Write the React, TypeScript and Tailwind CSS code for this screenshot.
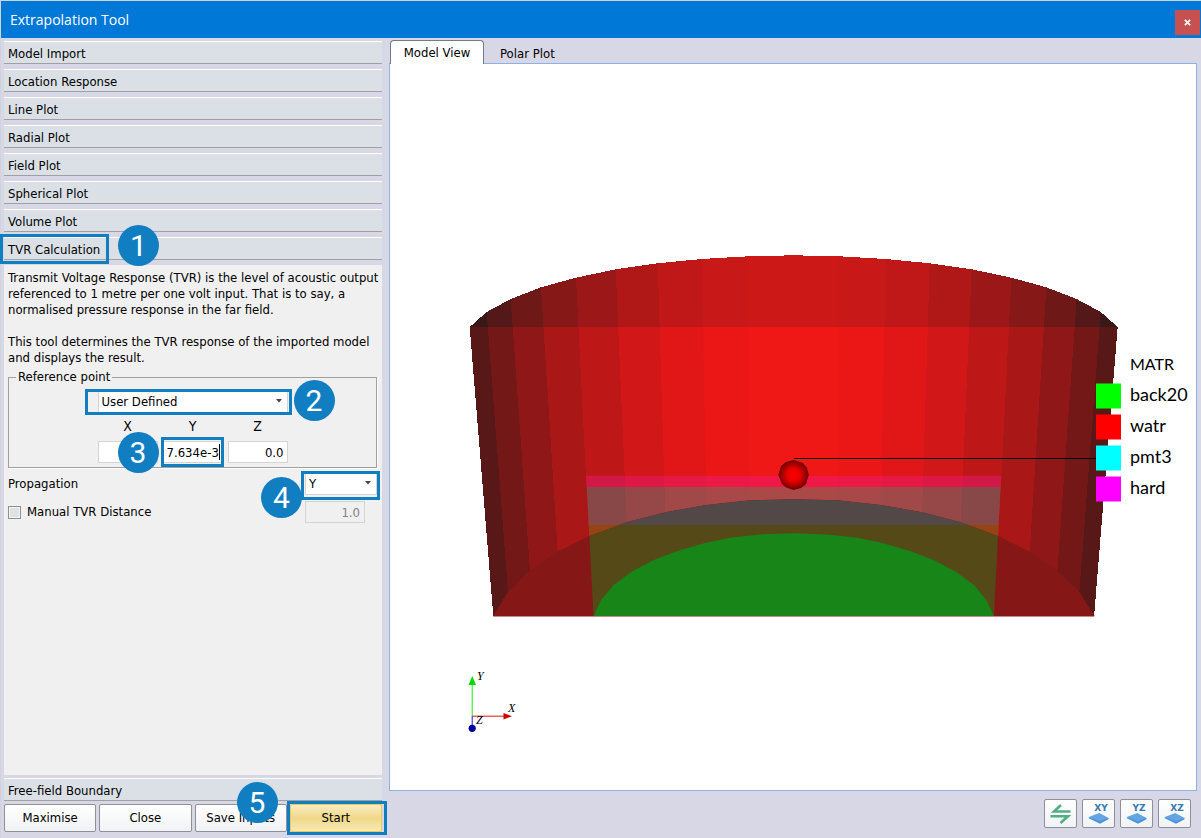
import React, { useState } from 'react';

const sections = [
  'Model Import',
  'Location Response',
  'Line Plot',
  'Radial Plot',
  'Field Plot',
  'Spherical Plot',
  'Volume Plot',
];

type Point = [number, number];

const CENTER_X = 793.7;

// Left half of each arc, the right half is mirrored
const rimLeft: Point[] = [
  [469.7, 327], [486.7, 312], [510.7, 299], [541, 287.3], [576, 277.7],
  [615.7, 269.3], [657.7, 263.3], [701.7, 259], [748, 256.3],
];
const floorLeft: Point[] = [
  [493.3, 616], [508, 592], [530, 571], [557.7, 551.7], [589, 536.3],
  [626.7, 522.3], [665.3, 512.3], [706.3, 505], [750, 500.3],
];
const discLeft: Point[] = [
  [593.7, 616], [601, 600], [613.3, 585.3], [631, 572], [653.3, 560.3],
  [677.3, 551], [705, 543], [730, 537.7], [760, 534.4],
];

const wallColors = ['#581818', '#741717', '#8f1717', '#a91717', '#be1717', '#d11717', '#e11717', '#eb1717', '#f01717'];
const rimColors = ['#3a1818', '#541818', '#6e1818', '#871818', '#9c1818', '#b01818', '#c01818', '#c81818', '#cd1818'];

const mirror = (points: Point[], top: number): Point[] => [
  ...points,
  [CENTER_X, top],
  ...[...points].reverse().map(([x, y]): Point => [2 * CENTER_X - x, y]),
];

const toPoints = (points: Point[]) => points.map((p) => p.join(',')).join(' ');

const rim = mirror(rimLeft, 255.3);
const floor = mirror(floorLeft, 499.3);
const disc = mirror(discLeft, 533.3);

const materials = [
  { name: 'back20', color: '#00ff00' },
  { name: 'watr', color: '#ff0000' },
  { name: 'pmt3', color: '#00ffff' },
  { name: 'hard', color: '#ff00ff' },
];

function Wall({ colors }: { colors: string[] }) {
  return (
    <g shapeRendering="crispEdges">
      {rim.slice(0, -1).map((p, i) => (
        <polygon
          key={i}
          points={toPoints([p, rim[i + 1], floor[i + 1], floor[i]])}
          fill={colors[i < 9 ? i : 17 - i]}
        />
      ))}
    </g>
  );
}

function ModelScene() {
  return (
    <svg viewBox="390 64 806 726" className="block w-full h-auto" role="img" aria-label="Model view">
      <defs>
        <clipPath id="upper"><rect x="460" y="240" width="670" height="87" /></clipPath>
        <clipPath id="floor"><polygon points={toPoints(floor)} /></clipPath>
        <radialGradient id="ball">
          <stop offset="0" stopColor="#ff0000" />
          <stop offset="0.45" stopColor="#e60000" />
          <stop offset="1" stopColor="#6b0000" />
        </radialGradient>
      </defs>

      {/* Water volume */}
      <polygon points={toPoints(floor)} fill="#851717" stroke="#851717" />
      <Wall colors={wallColors} />
      <g clipPath="url(#upper)"><Wall colors={rimColors} /></g>

      {/* Transducer layers */}
      <polygon points="586,475.7 1001.4,475.7 1000.6,487 586.8,487" fill="#ee1a88" fillOpacity="0.42" />
      <polygon points="586.8,487 1000.6,487 998.6,525 588.8,525" fill="#14b8b8" fillOpacity="0.31" />
      <polygon points="588.8,525 998.6,525 994,616 593.5,616" fill="#30c010" fillOpacity="0.27" />

      <polygon points={toPoints(floor)} fill="#851717" />
      <g clipPath="url(#floor)">
        <polygon points="586.8,487 1000.6,487 998.6,525 588.8,525" fill="#524848" />
        <polygon points="588.8,525 998.6,525 994,616 593.5,616" fill="#554918" />
      </g>
      <polygon points={toPoints(disc)} fill="#178517" />

      <path d="M794 458.5H1096" stroke="#000" />
      <polygon
        points="793.5,460 803,463 807,468 808.8,475 806,484 801,488 793.5,490 786,487.5 782,484 778.3,475 781,466 786,462"
        fill="url(#ball)"
      />

      {/* Legend */}
      <g className="font-[Lato,sans-serif] text-[18px]">
        <text x="1130" y="370" className="text-[16px]">MATR</text>
        {materials.map((m, i) => (
          <g key={m.name}>
            <rect x="1096" y={383.5 + i * 31} width="25" height="25" fill={m.color} />
            <text x="1130" y={401 + i * 31}>{m.name}</text>
          </g>
        ))}
      </g>

      {/* Axes */}
      <path d="M472.3 716V684" stroke="#60f060" strokeWidth="1.5" />
      <path d="M472 716.2H505" stroke="#f06060" strokeWidth="1.5" />
      <path d="M472.3 716V726" stroke="#6060e8" strokeWidth="1.5" />
      <polygon points="472.3,676 468.5,685 476,685" fill="#00d800" />
      <polygon points="512,716.2 503.5,713 503.5,719.5" fill="#d00000" />
      <circle cx="472.2" cy="728.3" r="3.6" fill="#00009a" />
      <g className="font-['Liberation_Serif',serif] italic text-[12px]">
        <text x="477" y="680">Y</text>
        <text x="508" y="712">X</text>
        <text x="476" y="724">Z</text>
      </g>
    </svg>
  );
}

function Badge({ n, className }: { n: number; className: string }) {
  return (
    <span
      className={`absolute z-20 flex size-[41px] items-center justify-center rounded-full bg-[#117ec1] font-[Roboto,sans-serif] text-[30px] leading-none text-white pointer-events-none ${className}`}
    >
      {n}
    </span>
  );
}

function Highlight({ className }: { className: string }) {
  return <span className={`absolute z-10 border-3 border-[#117ec1] pointer-events-none ${className}`} />;
}

function SectionHeader({ title, children }: { title: string; children?: React.ReactNode }) {
  return (
    <div className="relative">
      <button className="block h-[23px] w-full border-t border-b border-t-white border-b-[#a0a0a0] bg-[#dbe0e7] pl-1 pt-0.5 text-left leading-5">
        {title}
      </button>
      {children}
    </div>
  );
}

function Combo({ id, label, options, className }: { id: string; label: string; options: string[]; className: string }) {
  return (
    <div className={`relative ${className}`}>
      <select id={id} aria-label={label} className="block h-[22px] w-full appearance-none border border-[#d4d4d4] bg-white pl-[3px] outline-none">
        {options.map((o) => <option key={o}>{o}</option>)}
      </select>
      <svg viewBox="0 0 6 4" className="absolute right-1.5 top-2 h-1 w-1.5 pointer-events-none">
        <path d="M0 0h6L3 3.5z" fill="#444" />
      </svg>
    </div>
  );
}

function PlaneIcon({ label }: { label: string }) {
  return (
    <svg viewBox="0 0 24 24" className="size-6">
      <text x="14" y="9" textAnchor="middle" fill="#3878b4" className="font-['DejaVu_Sans',sans-serif] text-[9px] font-bold">
        {label}
      </text>
      <path d="M1.8 15l10.5-4 9.2 5-8.6 5z" fill="#62a5e2" />
      <path d="M1.8 15l11 4.4 8.7-3.6v1.4l-8.5 4.6L1.8 16.2z" fill="#4a92d6" />
    </svg>
  );
}

const coordClass = 'h-[22px] w-[60px] border border-[#d4d4d4] bg-white px-[3px] text-right outline-none';
const coordLabelClass = 'pb-2 text-[14px] leading-[14px]';
const buttonClass = 'h-7 w-full rounded-xs border border-[#8e8f98] bg-linear-to-b from-white to-[#f1f2f5]';
const toolClass = 'flex h-[29px] w-[33px] items-center justify-center rounded-xs border border-[#8e8f98] bg-linear-to-b from-white to-[#f1f2f5]';

export default function App() {
  const [point, setPoint] = useState({ x: '0.0', y: '7.634e-3', z: '0.0' });
  const [manual, setManual] = useState(false);

  return (
    <div className="flex min-h-screen flex-col border-l border-t border-[#d0d4dc] bg-[#d8d7e5] font-['DejaVu_Sans_Condensed','DejaVu_Sans',sans-serif] text-[13px] text-black">
      <header className="flex h-[37px] items-center justify-between bg-[#0078d7] pl-[9px]">
        <h1 className="font-['Open_Sans',sans-serif] text-[14px] text-white">Extrapolation Tool</h1>
        <button aria-label="Close window" className="mr-px mt-1.5 flex size-[25px] items-center justify-center bg-[#c75050]">
          <svg viewBox="0 0 8 8" className="size-[7px]">
            <path d="M1 1l6 6M7 1L1 7" stroke="#fff" strokeWidth="2" />
          </svg>
        </button>
      </header>

      <div className="flex flex-1">
        {/* Left side */}
        <aside className="flex w-[381px] shrink-0 flex-col pb-1.5 pl-[3px] pt-[3px]">
          <div className="flex flex-col gap-[5px]">
            {sections.map((s) => <SectionHeader key={s} title={s} />)}
            <SectionHeader title="TVR Calculation">
              <Highlight className="-left-1 -top-[3px] h-[30px] w-[109px]" />
              <Badge n={1} className="-top-3 left-[114px]" />
            </SectionHeader>
          </div>

          <section className="mt-[5px] flex-1 bg-[#f0f0f0] pl-1 pr-[5px] pt-[5px]">
            <p className="whitespace-nowrap leading-4">
              Transmit Voltage Response (TVR) is the level of acoustic output<br />
              referenced to 1 metre per one volt input. That is to say, a<br />
              normalised pressure response in the far field.
            </p>
            <p className="mt-4 whitespace-nowrap leading-4">
              This tool determines the TVR response of the imported model<br />
              and displays the result.
            </p>

            <fieldset className="relative mt-[3px] flex flex-col items-center border border-[#a0a0a0] pb-1 shadow-[1px_1px_0_#fff]">
              <legend className="ml-[7px] px-0.5 leading-4">Reference point</legend>
              <div className="relative mt-1.5">
                <Combo id="ref" label="Reference point" options={['User Defined', 'Origin']} className="w-[190px]" />
                <Highlight className="-left-[13px] -top-0.5 h-[26px] w-[207px]" />
                <Badge n={2} className="-top-[11px] left-[196px]" />
              </div>
              <div className="mt-1.5 flex gap-[5px]">
                <div className="relative flex flex-col items-center">
                  <label htmlFor="px" className={coordLabelClass}>X</label>
                  <input id="px" className={coordClass} value={point.x} onChange={(e) => setPoint({ ...point, x: e.target.value })} />
                  <Badge n={3} className="left-5 top-[13px]" />
                </div>
                <div className="relative flex flex-col items-center">
                  <label htmlFor="py" className={coordLabelClass}>Y</label>
                  <input id="py" className={coordClass} value={point.y} onChange={(e) => setPoint({ ...point, y: e.target.value })} />
                  <span className="absolute right-[3px] top-[25px] h-4 w-px bg-black" />
                  <Highlight className="-left-0.5 top-[18px] h-[30px] w-[63px]" />
                </div>
                <div className="flex flex-col items-center">
                  <label htmlFor="pz" className={coordLabelClass}>Z</label>
                  <input id="pz" className={coordClass} value={point.z} onChange={(e) => setPoint({ ...point, z: e.target.value })} />
                </div>
              </div>
            </fieldset>

            <div className="mt-[5px] flex items-center justify-between">
              <label htmlFor="propagation">Propagation</label>
              <div className="relative">
                <Combo id="propagation" label="Propagation" options={['Y', 'X', 'Z']} className="w-[72px]" />
                <Highlight className="-left-1 -top-0.5 h-[29px] w-[79px]" />
                <Badge n={4} className="-left-11 top-1" />
              </div>
            </div>

            <div className="mt-1.5 flex items-center justify-between">
              <label className="flex items-center gap-1.5">
                <input
                  type="checkbox"
                  checked={manual}
                  onChange={(e) => setManual(e.target.checked)}
                  className="size-[13px] appearance-none border border-[#8e8f8f] bg-[#dfe2e5] shadow-[inset_0_0_0_1px_#f4f4f4] checked:bg-[#117ec1]"
                />
                Manual TVR Distance
              </label>
              <input
                aria-label="TVR distance"
                disabled={!manual}
                defaultValue="1.0"
                className="mr-3 h-[22px] w-[60px] border border-[#d4d4d4] bg-[#f0f0f0] px-1 text-right text-[#838383]"
              />
            </div>
          </section>

          <div className="mt-[3px]">
            <SectionHeader title="Free-field Boundary" />
          </div>

          <div className="mt-[3px] grid grid-cols-4 gap-[3px]">
            <button className={buttonClass}>Maximise</button>
            <button className={buttonClass}>Close</button>
            <div className="relative">
              <button className={buttonClass}>Save Inputs</button>
              <Badge n={5} className="-top-[22px] left-[42px]" />
            </div>
            <div className="relative">
              <button className="h-7 w-full rounded-xs border border-[#e8c95c] bg-linear-to-b from-[#f8ecc4] via-[#f0d888] to-[#f7e8b4]">Start</button>
              <Highlight className="-left-[3px] -right-[5px] -top-[3px] h-[34px]" />
            </div>
          </div>
        </aside>

        {/* Right side */}
        <main className="flex min-w-0 flex-1 flex-col pl-[7px] pr-1 pt-0.5">
          <div role="tablist" className="flex h-[23px] items-stretch pl-px">
            <button role="tab" aria-selected="true" className="relative z-10 -mb-px w-[94px] rounded-t-sm border border-b-0 border-[#6d7b8a] bg-white">
              Model View
            </button>
            <button role="tab" aria-selected="false" className="px-4 pt-1">Polar Plot</button>
          </div>
          <div className="border border-[#8fb0e6] bg-white">
            <ModelScene />
          </div>
          <div className="mb-2.5 mr-1.5 mt-2 flex justify-end gap-[5px]">
            <button aria-label="Flip view" className={toolClass}>
              <svg viewBox="0 0 24 24" className="size-6" fill="none" stroke="#51ae85" strokeWidth="2.6">
                <path d="M21.5 9.5H5L12 3" />
                <path d="M1.5 14.3H19L11.5 21" />
              </svg>
            </button>
            {['XY', 'YZ', 'XZ'].map((p) => (
              <button key={p} className={toolClass}><PlaneIcon label={p} /></button>
            ))}
          </div>
        </main>
      </div>
    </div>
  );
}
